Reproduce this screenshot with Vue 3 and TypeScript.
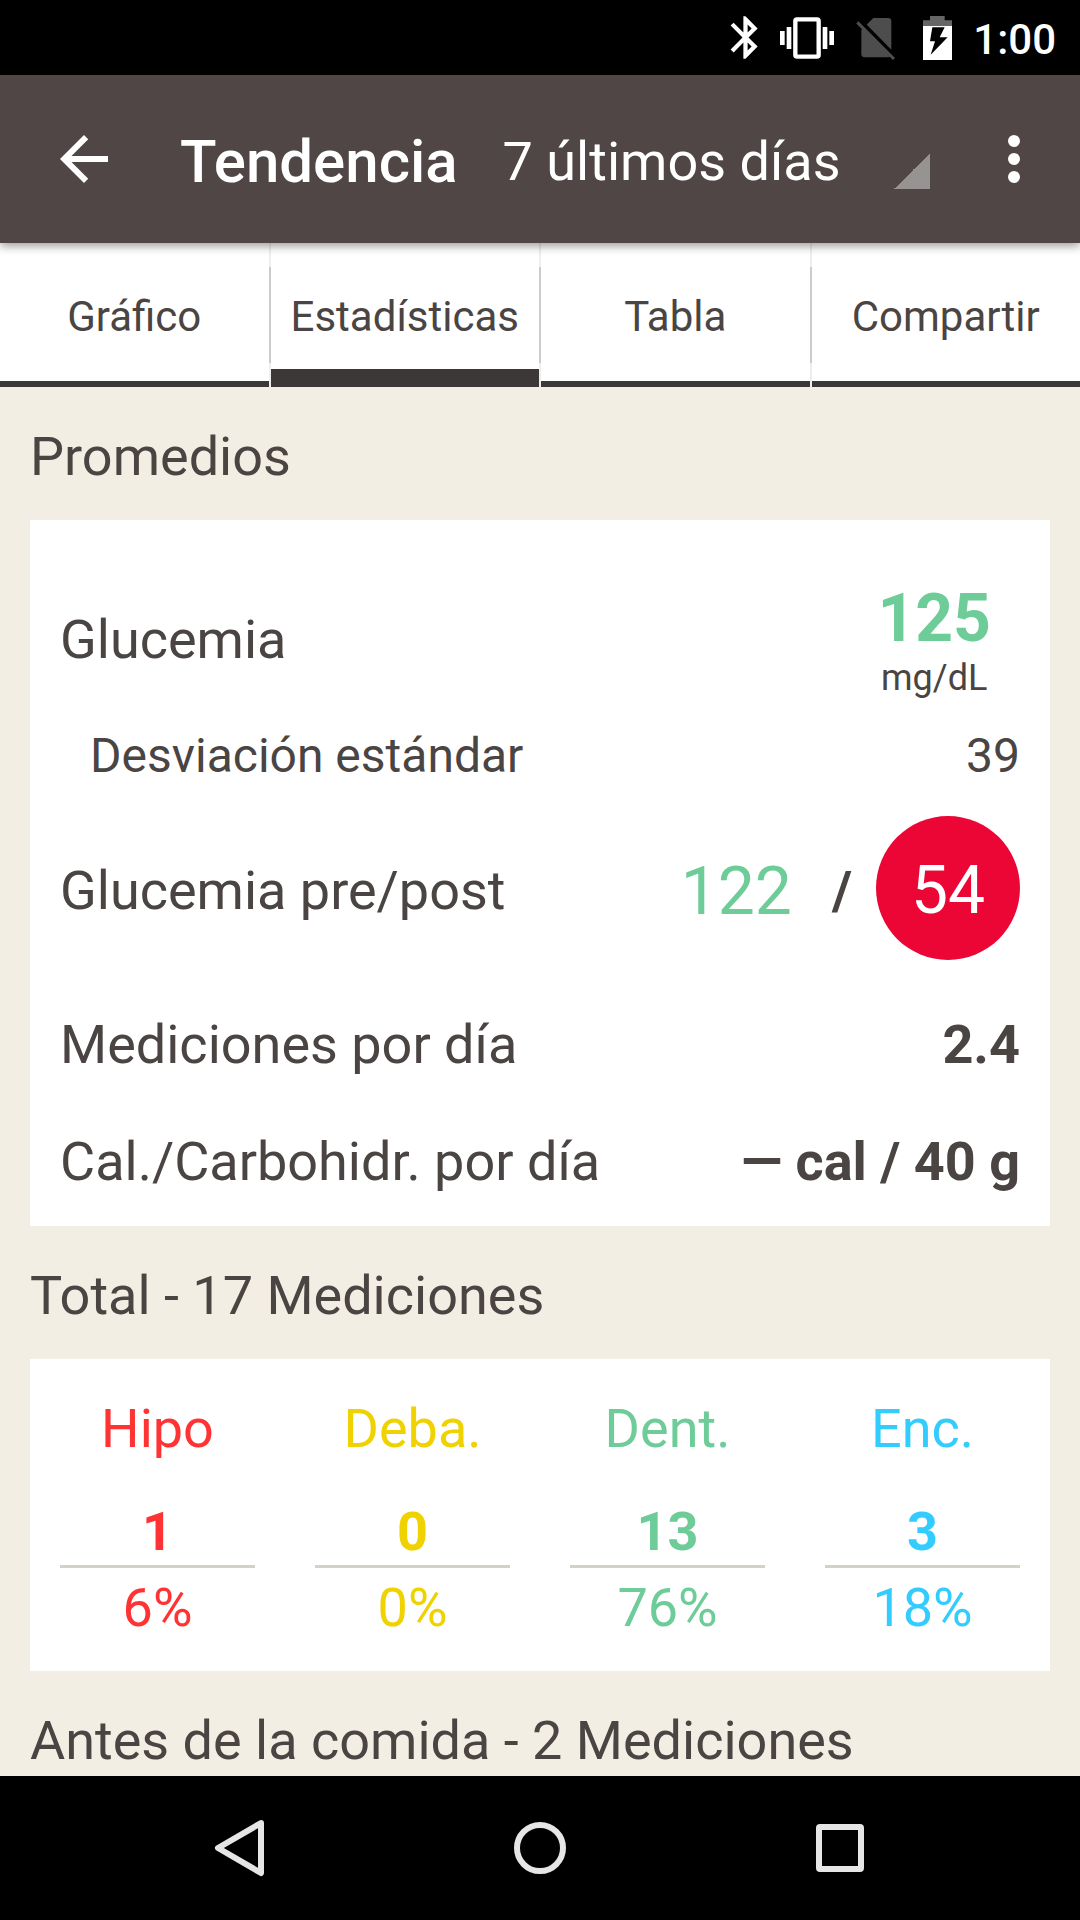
<script setup lang="ts">
import { ref } from 'vue'

interface RangeColumn {
  label: string
  count: number
  percent: string
  tone: string
}

const period = ref('7')
const activeTab = ref('Estadísticas')
const tabs: string[] = ['Gráfico', 'Estadísticas', 'Tabla', 'Compartir']

const ranges: RangeColumn[] = [
  { label: 'Hipo', count: 1, percent: '6%', tone: 'hypo' },
  { label: 'Deba.', count: 0, percent: '0%', tone: 'below' },
  { label: 'Dent.', count: 13, percent: '76%', tone: 'within' },
  { label: 'Enc.', count: 3, percent: '18%', tone: 'above' },
]
</script>

<template>
  <div class="screen">
    <div class="status">
      <svg class="bluetooth" viewBox="0 0 24 24" aria-hidden="true">
        <path d="M17.71 7.71L12 2h-1v7.59L6.41 5 5 6.41 10.59 12 5 17.59 6.41 19 11 14.41V22h1l5.71-5.71-4.3-4.29 4.3-4.29zM13 5.83l1.88 1.88L13 9.59V5.83zm1.88 10.46L13 18.17v-3.76l1.88 1.88z" />
      </svg>
      <svg class="vibrate" viewBox="0 0 162 132" aria-hidden="true">
        <rect x="46" y="10" width="70" height="112" rx="5" fill="none" stroke="#fff" stroke-width="13" />
        <path d="M20 33h14v66H20zM128 33h14v66h-14zM0 45h14v42H0zM148 45h14v42h-14z" />
      </svg>
      <svg class="sim" viewBox="0 0 120 132" aria-hidden="true">
        <path d="M52 6h44q10 0 10 10v98q0 10-10 10H26q-10 0-10-10V42z" fill="#4d4d4d" />
        <path d="M9 11l108 110" stroke="#000" stroke-width="12" />
        <path d="M4 19l110 110" stroke="#4d4d4d" stroke-width="9" />
      </svg>
      <svg class="battery" viewBox="0 0 87 132" aria-hidden="true">
        <path d="M21 0h44v13h22v18H0V13h21z" fill="#666" />
        <path d="M0 30h87v102H0z" />
        <path d="M28 34h37L50 64h24L23 116l13-40H21z" fill="#000" />
      </svg>
      <time class="clock">1:00</time>
    </div>

    <header class="appbar">
      <button class="icon-button" type="button" aria-label="Atrás">
        <svg viewBox="0 0 24 24" aria-hidden="true">
          <path d="M20 11H7.83l5.59-5.59L12 4l-8 8 8 8 1.41-1.41L7.83 13H20v-2z" />
        </svg>
      </button>
      <h1 class="title">Tendencia</h1>
      <select v-model="period" class="period" aria-label="Periodo">
        <option value="7">7 últimos días</option>
        <option value="14">14 últimos días</option>
        <option value="30">30 últimos días</option>
      </select>
      <button class="icon-button" type="button" aria-label="Más opciones">
        <svg viewBox="0 0 24 24" aria-hidden="true">
          <circle cx="12" cy="6" r="2" />
          <circle cx="12" cy="12" r="2" />
          <circle cx="12" cy="18" r="2" />
        </svg>
      </button>
    </header>

    <nav class="tabs">
      <button
        v-for="tab in tabs"
        :key="tab"
        type="button"
        class="tab"
        :class="{ active: tab === activeTab }"
        @click="activeTab = tab"
      >
        {{ tab }}
      </button>
    </nav>

    <main class="content">
      <h2 class="heading">Promedios</h2>
      <dl class="card averages">
        <div class="row">
          <dt>Glucemia</dt>
          <dd class="reading">
            <span class="large strong within">125</span>
            <span class="unit">mg/dL</span>
          </dd>
        </div>
        <div class="row deviation">
          <dt>Desviación estándar</dt>
          <dd>39</dd>
        </div>
        <div class="row prepost">
          <dt>Glucemia pre/post</dt>
          <dd class="pair">
            <span class="large within">122</span>
            <span class="slash">/</span>
            <span class="large badge">54</span>
          </dd>
        </div>
        <div class="row daily">
          <dt>Mediciones por día</dt>
          <dd class="strong">2.4</dd>
        </div>
        <div class="row daily">
          <dt>Cal./Carbohidr. por día</dt>
          <dd class="strong">— cal / 40 g</dd>
        </div>
      </dl>

      <h2 class="heading">Total - 17 Mediciones</h2>
      <div class="card totals">
        <table>
          <thead>
            <tr>
              <th v-for="r in ranges" :key="r.label" scope="col" :class="r.tone">{{ r.label }}</th>
            </tr>
          </thead>
          <tbody>
            <tr>
              <td v-for="r in ranges" :key="r.label" :class="r.tone">
                <span class="count">{{ r.count }}</span>
              </td>
            </tr>
            <tr>
              <td v-for="r in ranges" :key="r.label" class="percent" :class="r.tone">{{ r.percent }}</td>
            </tr>
          </tbody>
        </table>
      </div>

      <h2 class="heading">Antes de la comida - 2 Mediciones</h2>
    </main>

    <footer class="system">
      <button type="button" aria-label="Volver">
        <svg viewBox="0 0 72 72" aria-hidden="true"><path d="M57 11L14 36l43 25z" /></svg>
      </button>
      <button type="button" aria-label="Inicio">
        <svg viewBox="0 0 72 72" aria-hidden="true"><circle cx="36" cy="36" r="23" /></svg>
      </button>
      <button type="button" aria-label="Recientes">
        <svg viewBox="0 0 72 72" aria-hidden="true"><rect x="15" y="15" width="42" height="42" rx="1" /></svg>
      </button>
    </footer>
  </div>
</template>

<style>
body {
  margin: 0;
  background: #000;
}
</style>

<style scoped>
.screen {
  display: flex;
  flex-direction: column;
  height: 100vh;
  font-family: Roboto, "Noto Sans", sans-serif;
  font-size: 54px;
  line-height: 64px;
  color: #4a4443;
  background: #f3eee3;
}

button {
  padding: 0;
  border: 0;
  background: none;
  font: inherit;
  color: inherit;
  cursor: pointer;
}

svg {
  display: block;
  fill: #fff;
}

.status {
  flex: none;
  display: flex;
  align-items: center;
  justify-content: flex-end;
  height: 75px;
  padding-right: 24px;
  box-sizing: border-box;
  background: #000;
  color: #fff;
}

.bluetooth {
  width: 51px;
  height: 51px;
}

.vibrate {
  width: 54px;
  height: 44px;
  margin-left: 9px;
}

.sim {
  width: 40px;
  height: 44px;
  margin-left: 22px;
}

.battery {
  width: 29px;
  height: 44px;
  margin-left: 27px;
}

.clock {
  margin-left: 21px;
  padding-top: 4px;
  font-size: 42px;
  line-height: 48px;
  font-weight: 500;
}

.appbar {
  position: relative;
  z-index: 1;
  flex: none;
  display: flex;
  align-items: center;
  height: 168px;
  padding: 0 30px 0 48px;
  box-sizing: border-box;
  background: #4f4645;
  box-shadow: 0 3px 9px rgba(0, 0, 0, 0.4);
  color: #fff;
}

.icon-button {
  flex: none;
}

.icon-button svg {
  width: 72px;
  height: 72px;
}

.title {
  margin: 0 45px 0 60px;
  padding-top: 5px;
  font-size: 60px;
  line-height: 70px;
  font-weight: 500;
}

.period {
  flex: 1;
  min-width: 0;
  height: 72px;
  margin: 0 48px 0 0;
  padding: 5px 48px 0 0;
  border: 0;
  appearance: none;
  background: linear-gradient(to bottom right, transparent 50%, #969392 50%) right bottom 6px / 36px 36px no-repeat;
  font: inherit;
  color: #fff;
}

.period option {
  color: #4a4443;
}

.tabs {
  flex: none;
  display: flex;
  gap: 2px;
  height: 144px;
  background: linear-gradient(#eee 24px, #ccc 24px, #ccc 120px, #eee 120px);
}

.tab {
  flex: 1 1 0;
  padding-top: 10px;
  border-bottom: 6px solid #3c3837;
  background: #fff;
  font-size: 42px;
  line-height: 48px;
}

.tab.active {
  padding-top: 22px;
  border-bottom-width: 18px;
}

.content {
  flex: 1;
  min-height: 0;
  padding: 0 30px;
  overflow-y: auto;
  scrollbar-width: none;
}

.heading {
  margin: 0;
  padding: 38px 0 31px;
  font: inherit;
}

.card {
  margin: 0;
  background: #fff;
}

.averages {
  padding: 60px 30px 32px;
}

.row {
  display: flex;
  align-items: center;
  justify-content: space-between;
}

.row dd {
  margin: 0;
}

.row .reading {
  display: flex;
  flex-direction: column;
  align-items: center;
  margin-right: 29px;
}

.large {
  font-size: 66px;
  line-height: 77px;
}

.strong {
  font-weight: 700;
}

.unit {
  font-size: 36px;
  line-height: 42px;
}

.deviation {
  margin-top: 29px;
  padding-left: 30px;
  font-size: 48px;
  line-height: 56px;
}

.prepost {
  margin-top: 32px;
}

.prepost dt,
.prepost .slash,
.prepost .within {
  padding-top: 6px;
}

.pair {
  display: flex;
  align-items: center;
}

.slash {
  margin: 0 24px 0 40px;
  font-weight: 700;
}

.prepost .badge {
  width: 144px;
  height: 144px;
  padding-top: 6px;
  box-sizing: border-box;
  border-radius: 50%;
  background: #eb0635;
  line-height: 138px;
  text-align: center;
  color: #fff;
}

.daily {
  margin-top: 53px;
}

.totals {
  padding: 38px 0 31px;
}

table {
  width: 100%;
  table-layout: fixed;
  border-collapse: collapse;
}

th,
td {
  padding: 0 30px;
  text-align: center;
  font-weight: 400;
}

.count {
  display: block;
  margin-top: 39px;
  padding-bottom: 1px;
  border-bottom: 3px solid #d5d1c4;
  font-weight: 700;
}

td.percent {
  padding-top: 8px;
}

.hypo {
  color: #ff3333;
}

.below {
  color: #efd200;
}

.within {
  color: #6dcc98;
}

.above {
  color: #33ccff;
}

.system {
  flex: none;
  display: flex;
  height: 144px;
  padding: 0 90px;
  background: #000;
}

.system button {
  flex: 1 1 0;
  display: flex;
  align-items: center;
  justify-content: center;
}

.system svg {
  width: 72px;
  height: 72px;
  fill: none;
  stroke: #e6e6e6;
  stroke-width: 6;
  stroke-linejoin: round;
}
</style>
